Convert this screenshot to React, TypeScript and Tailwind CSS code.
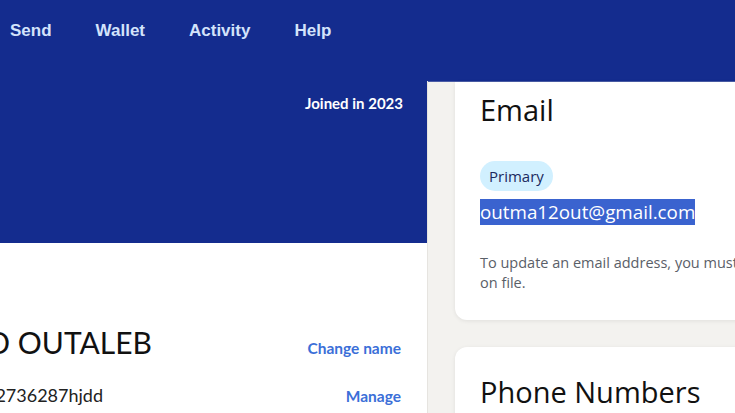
import React from "react";

export default function App() {
  const sans = { fontFamily: '"Open Sans", "Noto Sans", sans-serif' };
  const lato = { fontFamily: 'Lato, "Open Sans", sans-serif' };
  return (
    <div className="w-[735px] h-[413px] overflow-hidden bg-[#f3f2ef]">
      <nav
        className="h-[81px] bg-[#142c8e] flex items-start pt-[20px] pl-[10px] gap-[44px]"
        style={{ fontFamily: '"Liberation Sans", Arial, sans-serif' }}
      >
        {["Send", "Wallet", "Activity", "Help"].map((t) => (
          <span key={t} className="text-[17px] leading-[22px] font-bold text-[#d3e3fb]">
            {t}
          </span>
        ))}
      </nav>
      <div className="flex items-start">
        <section className="w-[428px] shrink-0 h-[332px] bg-white border-r border-[#e6e4e0]" style={lato}>
          <div className="h-[162px] bg-[#142c8e] flex justify-end pr-[24px] pt-[12px]">
            <span className="text-white font-bold text-[15px] leading-[20px]">Joined in 2023</span>
          </div>
          <div className="pr-[26px] pt-[79px]">
            <div className="flex items-baseline justify-between">
              <div className="w-[152px] flex justify-end whitespace-nowrap">
                <span className="text-[30px] leading-[40px] text-[#111]">MOHAMED OUTALEB</span>
              </div>
              <span className="text-[15.5px] font-bold text-[#3b6fd8]">Change name</span>
            </div>
            <div className="flex items-baseline justify-between mt-[20px]">
              <div className="w-[103px] flex justify-end whitespace-nowrap">
                <span className="text-[18px] leading-[26px] text-[#222]">@outma12736287hjdd</span>
              </div>
              <span className="text-[15.5px] font-bold text-[#3b6fd8]">Manage</span>
            </div>
          </div>
        </section>
        <section className="pl-[27px] flex flex-col gap-[27px] border-t border-[#4a5ca6]" style={sans}>
          <div className="w-[640px] shrink-0 bg-white rounded-b-xl shadow-[0_1px_4px_rgba(0,0,0,0.08)] pl-[25px] pr-[30px] pt-[8px] pb-[27px]">
            <h2 className="text-[29px] leading-[40px] text-[#111]">Email</h2>
            <div className="mt-[31px] inline-flex h-[30px] items-center px-[9px] rounded-full bg-[#d1f0ff] text-[15px] text-[#1b2a5e]">
              Primary
            </div>
            <div className="mt-[8px] h-[26px] flex">
              <span className="bg-[#3a63cf] text-white text-[18.8px] leading-[26px]">outma12out@gmail.com</span>
            </div>
            <p className="mt-[28px] text-[14.5px] leading-[20px] text-[#5a6068]">
              To update an email address, you must have at least two email addresses
              <br />
              on file.
            </p>
          </div>
          <div className="w-[640px] shrink-0 h-[120px] bg-white rounded-xl shadow-[0_1px_4px_rgba(0,0,0,0.08)] pl-[25px] pt-[25px]">
            <h2 className="text-[29px] leading-[40px] text-[#111]">Phone Numbers</h2>
          </div>
        </section>
      </div>
    </div>
  );
}
